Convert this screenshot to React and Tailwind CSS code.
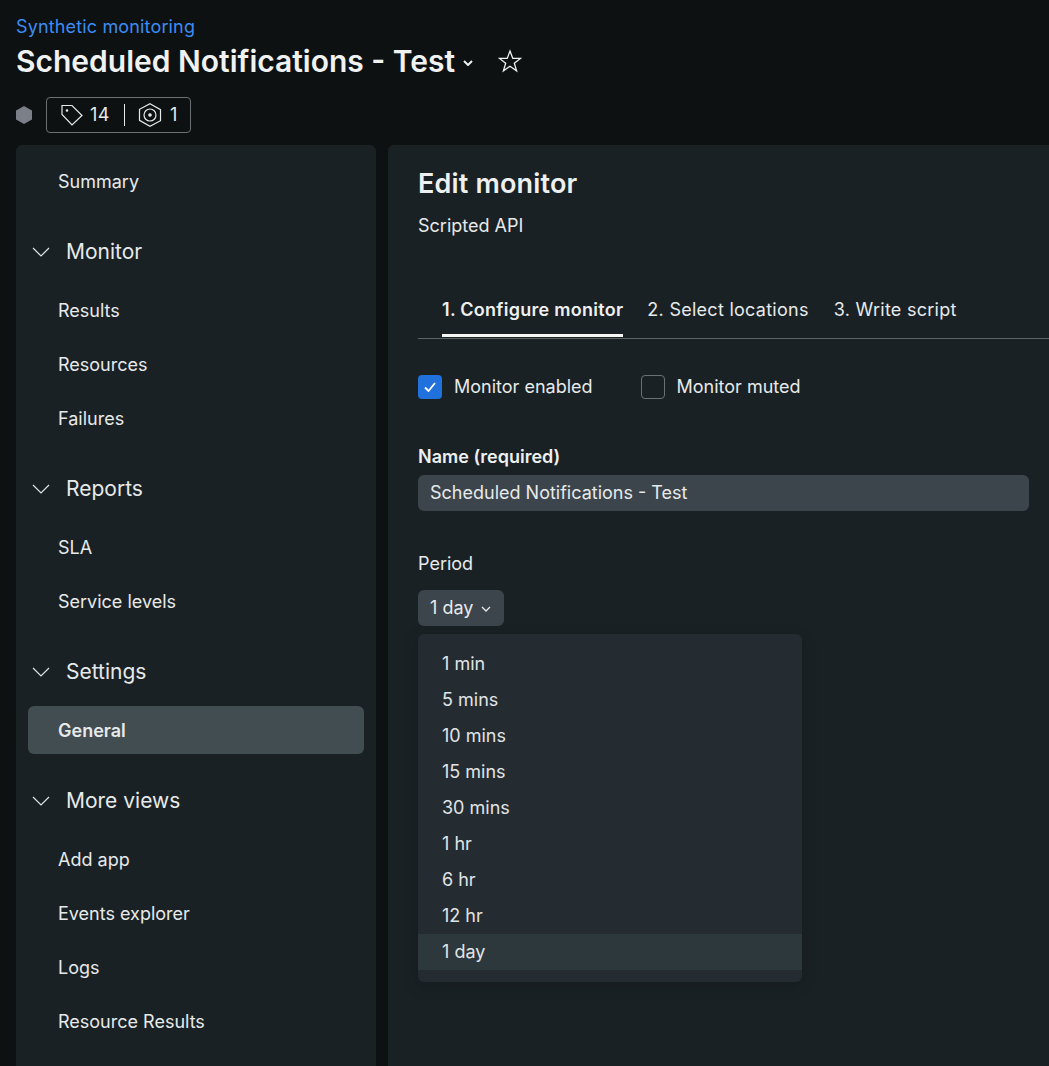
import React from "react";

const font = { fontFamily: "Inter, 'Noto Sans', sans-serif" };

function Chevron({ className }) {
  return (
    <svg className={className} viewBox="0 0 18 10" fill="none" stroke="currentColor" strokeWidth="1.2">
      <path d="M1 1l8 8 8-8" />
    </svg>
  );
}

function SmallChevron({ className, width = 1.6 }) {
  return (
    <svg className={className} viewBox="0 0 10 6" fill="none" stroke="currentColor" strokeWidth={width}>
      <path d="M1 1l4 4 4-4" />
    </svg>
  );
}

function Item({ label, active }) {
  return (
    <div className="h-[54px] flex items-center">
      <div
        className={
          "w-full h-12 flex items-center pl-[30px] pt-px rounded-[6px] text-[18px] leading-6 text-[#e7eaea] " +
          (active ? "bg-[#424d52] font-semibold" : "")
        }
      >
        {label}
      </div>
    </div>
  );
}

function Section({ title, items }) {
  return (
    <div className="mt-[22px]">
      <div className="h-11 mb-[9px] flex items-center text-[#e7eaea]">
        <Chevron className="w-[18px] h-[10px] ml-[4px] mr-4 text-[#dfe3e3]" />
        <span className="text-[21px] leading-7">{title}</span>
      </div>
      {items.map((i) => (
        <Item key={i.label} {...i} />
      ))}
    </div>
  );
}

const tab = "h-[56px] border-b-[3px] flex items-center pt-[3px] tracking-[0.27px] ";
const periods = ["1 min", "5 mins", "10 mins", "15 mins", "30 mins", "1 hr", "6 hr", "12 hr", "1 day"];

export default function App() {
  return (
    <div className="h-[1066px] overflow-hidden bg-[#0d1112] flex flex-col pl-4 text-[#e7eaea]" style={font}>
      <div className="h-[145px] shrink-0 pt-[14px]">
        <div className="text-[18px] leading-[26px] tracking-[0.15px] text-[#3c8cf3]">Synthetic monitoring</div>
        <div className="flex items-center h-[42px]">
          <h1 className="text-[30px] leading-[42px] font-semibold text-[#f0f2f2]">Scheduled Notifications - Test</h1>
          <SmallChevron className="w-[10px] h-[6px] ml-2 mt-[3px] text-[#f0f2f2]" width={2} />
          <svg className="w-6 h-6 ml-[25px]" viewBox="0 0 24 24" fill="none" stroke="#f0f2f2" strokeWidth="1.3" strokeLinejoin="miter">
            <path d="M12 2l2.8 7.4h7.7l-6.2 4.8 2.3 7.6-6.6-4.6-6.6 4.6 2.3-7.6-6.2-4.8h7.7z" />
          </svg>
        </div>
        <div className="flex items-center mt-[15px]">
          <svg className="w-4 h-[18px]" viewBox="0 0 16 18" fill="#7b7f87">
            <path d="M8 0l8 4.5v9L8 18l-8-4.5v-9z" />
          </svg>
          <div className="ml-[14px] h-9 w-[145px] border border-[#6b7072] rounded-[4px] flex items-center pl-[14px] text-[18px] leading-6 text-[#e7eaea]">
            <svg className="w-[22px] h-[22px]" viewBox="0 0 22 22" fill="none" stroke="#e7eaea" strokeWidth="1.2">
              <path d="M1 1.5h10L21 11.5 11 21 1 10.5z" />
              <circle cx="6" cy="6.5" r="0.7" fill="#e7eaea" />
            </svg>
            <span className="ml-[7px] pb-px tracking-[0.5px]">14</span>
            <span className="ml-[14px] w-px h-[22px] bg-[#e7eaea]" />
            <svg className="w-6 h-6 ml-[13px]" viewBox="0 0 24 24" fill="none" stroke="#e7eaea" strokeWidth="1.2">
              <path d="M12 .7l10.5 6v11L12 23.3l-10.5-6v-11z" />
              <circle cx="12" cy="12" r="6" />
              <circle cx="12" cy="12" r="1.2" fill="#e7eaea" />
            </svg>
            <span className="ml-2 pb-px">1</span>
          </div>
        </div>
      </div>

      <div className="flex-1 flex gap-3 min-h-0">
        <nav className="w-[360px] shrink-0 bg-[#1a2125] rounded-t-[6px] px-3 pt-[9px]">
          <Item label="Summary" />
          <Section title="Monitor" items={[{ label: "Results" }, { label: "Resources" }, { label: "Failures" }]} />
          <Section title="Reports" items={[{ label: "SLA" }, { label: "Service levels" }]} />
          <Section title="Settings" items={[{ label: "General", active: true }]} />
          <Section
            title="More views"
            items={[{ label: "Add app" }, { label: "Events explorer" }, { label: "Logs" }, { label: "Resource Results" }]}
          />
        </nav>

        <main className="flex-1 bg-[#1a2125] rounded-tl-[6px] pl-[30px] pt-[21px]">
          <h2 className="text-[27px] leading-9 font-semibold tracking-[0.17px] text-[#eef0f0]">Edit monitor</h2>
          <p className="mt-3 text-[18px] leading-6 text-[#e7eaea]">Scripted API</p>

          <div className="mt-[43px] border-b border-[#5b6164] flex h-[58px] text-[18px]">
            <div className={tab + "ml-6 border-[#f4f5f5] font-semibold text-[#eef0f0]"}>1. Configure monitor</div>
            <div className={tab + "ml-6 border-transparent"}>2. Select locations</div>
            <div className={tab + "ml-[25px] border-transparent"}>3. Write script</div>
          </div>

          <div className="flex items-center mt-9 text-[18px] leading-6 h-6">
            <span className="w-6 h-6 rounded-[4px] bg-[#2071dc] flex items-center justify-center">
              <svg className="w-3 h-[10px]" viewBox="0 0 12 10" fill="none" stroke="#fff" strokeWidth="1.8">
                <path d="M1 5.5l3.5 3.5L11 1" />
              </svg>
            </span>
            <span className="ml-3">Monitor enabled</span>
            <span className="ml-12 w-6 h-6 rounded-[4px] border border-[#6b7072]" />
            <span className="ml-3">Monitor muted</span>
          </div>

          <div className="mt-[46px] text-[18px] leading-6 font-semibold text-[#eef0f0]">Name (required)</div>
          <div className="mt-[6px] w-[611px] h-9 rounded-[6px] bg-[#3d454c] flex items-center pl-3 pb-px text-[18px]">
            Scheduled Notifications - Test
          </div>

          <div className="mt-[41px] text-[18px] leading-6">Period</div>
          <div className="relative mt-[14px]">
            <div className="w-[86px] h-9 rounded-[6px] bg-[#3d454c] flex items-center pl-3 text-[18px]">
              <span className="pb-px">1 day</span>
              <SmallChevron className="w-[10px] h-[6px] ml-2 mt-px" width={1.3} />
            </div>
            <div className="absolute left-0 top-11 w-[384px] h-[348px] bg-[#242c32] rounded-[6px] pt-3 shadow-[0_4px_16px_rgba(0,0,0,0.18)]">
              {periods.map((p) => (
                <div
                  key={p}
                  className={"h-9 flex items-center pl-6 pb-px text-[18px] text-[#e1e4e5] " + (p === "1 day" ? "bg-[#2d383d]" : "")}
                >
                  {p}
                </div>
              ))}
            </div>
          </div>
        </main>
      </div>
    </div>
  );
}
